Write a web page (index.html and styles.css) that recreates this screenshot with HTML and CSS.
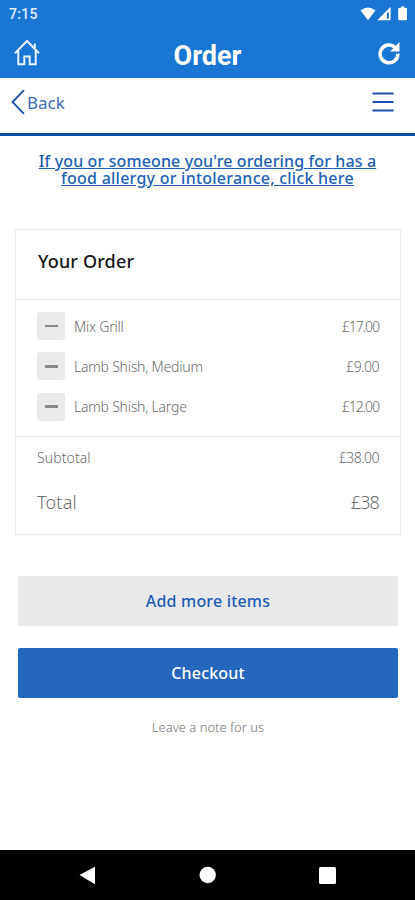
FILE: index.html
```html
<!DOCTYPE html>
<html lang="en">
<head>
<meta charset="utf-8">
<title>Order</title>
<link rel="stylesheet" href="styles.css">
</head>
<body>
<div class="screen">
  <header class="appbar">
    <div class="status">
      <span class="clock">7:15</span>
      <svg class="status-icons" width="48" height="16" viewBox="0 0 48 16">
        <path d="M0.5 4.500Q8 -1.500 15.500 4.500L8 14.200Z"/>
        <path d="M30.600 .8V14.200H17.200Z"/>
        <path class="signal-gap" d="M26.800 6.500h2v6.200h-2z"/>
        <path d="M40.800.5h3.600v1.400h1.600q1 0 1 1v10.300q0 1-1 1h-6.800q-1 0-1-1V2.900q0-1 1-1h1.600z"/>
      </svg>
    </div>
    <div class="titlebar">
      <svg class="home" width="28" height="28" viewBox="0 0 28 28">
        <path d="M2 14.300 14 2l12 12.300M5.300 12v13.200h6v-7.700h5.400v7.700h6V12M21.800 9V4.500"/>
      </svg>
      <h1 class="title">Order</h1>
      <svg class="refresh" width="24" height="24" viewBox="0 0 24 24">
        <path class="arc" d="M18.300 6.600A8.900 8.900 0 1 0 20.900 12.600"/>
        <path class="head" d="M22.500 1v9.400h-9.400z"/>
      </svg>
    </div>
  </header>
  <nav class="subnav">
    <a class="back"><svg width="14" height="26" viewBox="0 0 14 26"><path d="M13 1.200 1.500 13 13 24.800"/></svg><span>Back</span></a>
    <svg class="menu" width="22" height="20" viewBox="0 0 22 20"><path d="M.5 1.500h21M.5 10h21M.5 18.500h21"/></svg>
  </nav>
  <main class="content">
    <a class="allergy">If you or someone you're ordering for has a<br><span class="second">food allergy or intolerance, click here</span></a>
    <section class="card">
      <h2 class="card-title">Your Order</h2>
      <ul class="items">
        <li><i class="minus"></i><span class="name">Mix Grill</span><span class="price">£17.00</span></li>
        <li><i class="minus"></i><span class="name">Lamb Shish, Medium</span><span class="price short">£9.00</span></li>
        <li><i class="minus"></i><span class="name">Lamb Shish, Large</span><span class="price">£12.00</span></li>
      </ul>
      <div class="sums">
        <div class="row subtotal"><span>Subtotal</span><span class="price">£38.00</span></div>
        <div class="row total"><span>Total</span><span class="grand">£38</span></div>
      </div>
    </section>
    <div class="actions">
      <a class="btn more">Add more items</a>
      <a class="btn checkout">Checkout</a>
      <a class="note">Leave a note for us</a>
    </div>
  </main>
  <footer class="navbar">
    <svg width="415" height="50" viewBox="0 0 415 50">
      <path d="M79.500 25 95 16.800v17.400z"/>
      <circle cx="207.700" cy="25" r="8.200"/>
      <rect x="319" y="17" width="17" height="17" rx="1.500"/>
    </svg>
  </footer>
</div>
</body>
</html>
```

FILE: styles.css
```css
* { box-sizing: border-box; }
body { margin: 0; background: #fff; font-family: "Noto Sans", "Open Sans", sans-serif; }
h1, h2, ul { margin: 0; padding: 0; font-weight: inherit; }
ul { list-style: none; }
svg { display: block; fill: none; flex: none; }
.screen { width: 415px; height: 900px; display: flex; flex-direction: column; overflow: hidden; }

.appbar { flex: none; height: 78px; background: #1976d2; color: #fff; }
.status { height: 27px; padding: 0 7px 0 9px; display: flex; justify-content: space-between; align-items: center; }
.clock { font: 500 14px/27px Roboto, sans-serif; color: #e2edf8; letter-spacing: .3px; padding-top: 1px; }
.status-icons { fill: #fff; }
.signal-gap { fill: #1976d2; }
.titlebar { height: 51px; padding: 0 14px 0 13px; display: flex; align-items: center; justify-content: space-between; }
.home { stroke: #e8f2fc; stroke-width: 2; }
.title { font: 700 27px/51px Roboto, sans-serif; padding: 8px 3px 0 0; }
.refresh .arc { stroke: #fff; stroke-width: 3.500px; }
.refresh .head { fill: #fff; }

.subnav { flex: none; height: 58px; padding: 0 21px 7px 11px; border-bottom: 3px solid #0d4ea6; display: flex; align-items: center; justify-content: space-between; }
.back { display: flex; align-items: center; gap: 2px; color: #3c6bb8; font-size: 17px; }
.back svg { stroke: #1b50a8; stroke-width: 1.800; }
.menu { stroke: #1d4fae; stroke-width: 2.200; }

.content { flex: 1; }
.allergy { display: block; padding-top: 17px; height: 93px; text-align: center; color: #2260b3; font-weight: 500; font-size: 16px; letter-spacing: .12px; line-height: 17px; text-decoration: underline; white-space: nowrap; }
.second { letter-spacing: .24px; }
.card { margin: 0 14px 0 15px; height: 306px; border: 1px solid #ececec; box-shadow: 0 0 1px #eee; color: #6c6c6c; font-weight: 300; }
.card-title { height: 70px; padding-left: 22px; border-bottom: 1px solid #ececec; font-weight: 500; font-size: 18px; letter-spacing: .15px; line-height: 63px; color: #151515; }
.items { height: 137px; padding: 6px 21px 0 21px; border-bottom: 1px solid #ececec; font-size: 14px; }
.items li { height: 40.300px; display: flex; align-items: center; }
.minus { width: 28px; height: 28px; border-radius: 3px; background: #eaeaea; display: flex; align-items: center; justify-content: center; }
.minus::before { content: ""; width: 13px; height: 2.500px; background: #898989; }
.name { margin-left: 9px; letter-spacing: -.22px; }
.price { margin-left: auto; letter-spacing: -1.050px; }
.price.short { letter-spacing: -.550px; }
.sums { padding: 0 21px; }
.row { display: flex; justify-content: space-between; align-items: center; }
.subtotal { height: 40px; font-size: 14px; letter-spacing: .1px; }
.subtotal .price { letter-spacing: -.550px; }
.total { height: 50px; font-size: 18px; letter-spacing: .2px; }
.grand { letter-spacing: -.900px; }
.actions { padding: 41px 17px 0 18px; display: flex; flex-direction: column; }
.btn { height: 50px; border-radius: 2px; display: flex; align-items: center; justify-content: center; font-size: 16px; letter-spacing: .18px; font-weight: 500; }
.more { background: #e9e9e9; color: #1f5cb5; }
.checkout { margin-top: 22px; height: 50px; background: #2468bd; color: #fff; }
.note { height: 58px; display: flex; align-items: center; justify-content: center; color: #777; font-weight: 300; font-size: 13px; }
.navbar { flex: none; height: 50px; background: #000; }
.navbar svg { fill: #fff; }
```
